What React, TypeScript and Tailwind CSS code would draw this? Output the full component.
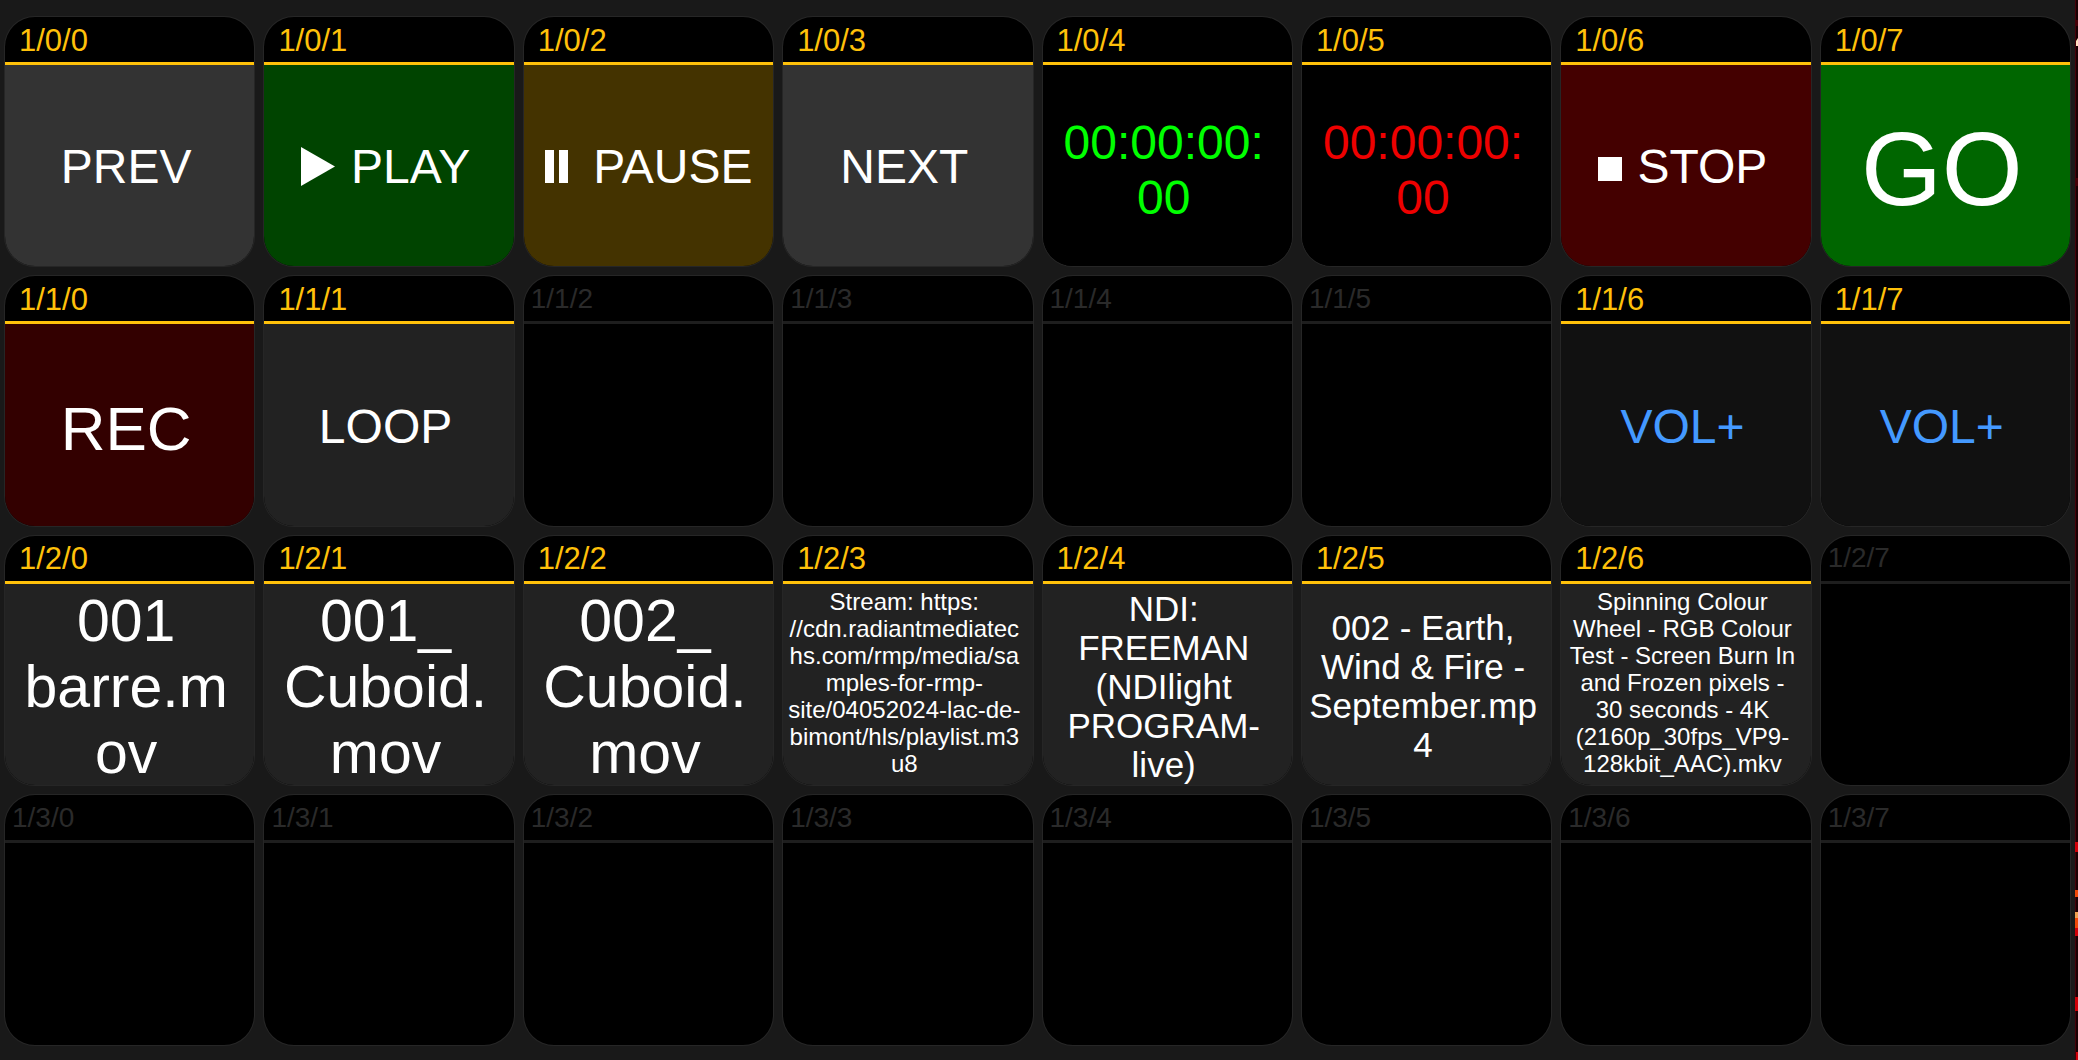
import React from "react";

type Cell = { label?: React.ReactNode; style?: string };

const big = "pt-1 text-[59px] leading-[66px] text-white bg-[#222222]";
const mid = "pt-0.5 text-[48px] leading-[55px]";
const timer = "pt-2 text-[48px] leading-[55px] bg-black";
const small = "pt-1 text-[35px] leading-[39px] text-white bg-[#222222]";
const tiny = "pb-1 text-[24px] leading-[27px] text-white bg-[#222222]";

const PlayIcon = () => (
  <svg viewBox="0 0 34 39" className="h-[39px] w-[34px] fill-white" aria-hidden="true">
    <path d="M0 0L34 19.5L0 39Z" />
  </svg>
);
const PauseIcon = () => (
  <svg viewBox="0 0 24 33" className="mr-2 ml-2 h-[33px] w-[24px] fill-white" aria-hidden="true">
    <path d="M0 0H9V33H0ZM14 0H23V33H14Z" />
  </svg>
);
const StopIcon = () => (
  <svg viewBox="0 0 24 24" className="mt-1 size-6 fill-white" aria-hidden="true">
    <path d="M0 0H24V24H0Z" />
  </svg>
);

const rows: Cell[][] = [
  [
    { label: "PREV", style: mid + " text-white bg-[#333333]" },
    { label: <><PlayIcon />PLAY</>, style: mid + " gap-4 text-white bg-[#004400]" },
    { label: <><PauseIcon />PAUSE</>, style: mid + " gap-4 text-white bg-[#443300]" },
    { label: "NEXT", style: mid + " text-white bg-[#333333]" },
    { label: "00:00:00:\n00", style: timer + " text-[#00ff00]" },
    { label: "00:00:00:\n00", style: timer + " text-[#ee0000]" },
    { label: <><StopIcon />STOP</>, style: mid + " gap-4 text-white bg-[#440000]" },
    { label: "GO", style: "pt-2 text-[104px] leading-[119px] text-white bg-[#006600]" },
  ],
  [
    { label: "REC", style: "pt-2 text-[62px] leading-[66px] text-white bg-[#330000]" },
    { label: "LOOP", style: mid + " text-white bg-[#222222]" },
    {},
    {},
    {},
    {},
    { label: "VOL+", style: mid + " text-[#4499ff] bg-[#111111]" },
    { label: "VOL+", style: mid + " text-[#4499ff] bg-[#111111]" },
  ],
  [
    { label: "001\nbarre.m\nov", style: big },
    { label: "001_\nCuboid.\nmov", style: big },
    { label: "002_\nCuboid.\nmov", style: big },
    {
      label:
        "Stream: https:\n//cdn.radiantmediatec\nhs.com/rmp/media/sa\nmples-for-rmp-\nsite/04052024-lac-de-\nbimont/hls/playlist.m3\nu8",
      style: tiny,
    },
    { label: "NDI:\nFREEMAN\n(NDIlight\nPROGRAM-\nlive)", style: small },
    { label: "002 - Earth,\nWind & Fire -\nSeptember.mp\n4", style: small },
    {
      label:
        "Spinning Colour\nWheel - RGB Colour\nTest - Screen Burn In\nand Frozen pixels -\n30 seconds - 4K\n(2160p_30fps_VP9-\n128kbit_AAC).mkv",
      style: tiny,
    },
    {},
  ],
  [{}, {}, {}, {}, {}, {}, {}, {}],
];

function DeckButton({ id, cell }: { id: string; cell: Cell }) {
  const used = cell.label !== undefined;
  return (
    <button
      type="button"
      className="flex aspect-square min-w-0 flex-col overflow-hidden rounded-[31px] border border-white/15 bg-black text-left"
    >
      <span
        className={
          used
            ? "flex h-12 w-full shrink-0 items-center border-b-[3px] border-[#ffc10a] pt-0.5 pl-3.5 text-[31px] leading-9 text-[#ffc10a]"
            : "flex h-12 w-full shrink-0 items-center border-b-[3px] border-[#1e1e1e] pl-[7px] text-[28px] leading-9 text-[#2a2a2a]"
        }
      >
        {id}
      </span>
      {used && (
        <span
          className={
            "flex w-full flex-1 items-center justify-center whitespace-pre pr-[7px] text-center " + cell.style
          }
        >
          {cell.label}
        </span>
      )}
    </button>
  );
}

export default function App() {
  return (
    <div className="flex min-h-screen bg-[#191919] font-['Liberation_Sans',Arial,sans-serif]">
      <main className="grid flex-1 grid-cols-8 content-start gap-2 px-1 pt-4">
        {rows.flatMap((row, r) =>
          row.map((cell, c) => <DeckButton key={`${r}-${c}`} id={`1/${r}/${c}`} cell={cell} />),
        )}
      </main>
      <svg className="w-[3px] shrink-0 self-stretch" viewBox="0 0 3 1060" preserveAspectRatio="none" aria-hidden="true">
        <path fill="#180003" d="M0 0H3V1060H0Z" />
        <path fill="#450008" d="M0 0H1V1060H0ZM1 20H3V26H1ZM1 178H3V186H1Z" />
        <path fill="#ffe0c0" d="M1 46V41L3 38V46Z" />
        <path fill="#d00008" d="M0 842H3V852H0ZM0 928H3V936H0ZM0 997H3V1011H0ZM1 1052H3V1060H1Z" />
        <path fill="#f04808" d="M0 890H3V897H0ZM0 918H3V928H0Z" />
        <path fill="#f0a050" d="M0 912H3V918H0Z" />
      </svg>
    </div>
  );
}
